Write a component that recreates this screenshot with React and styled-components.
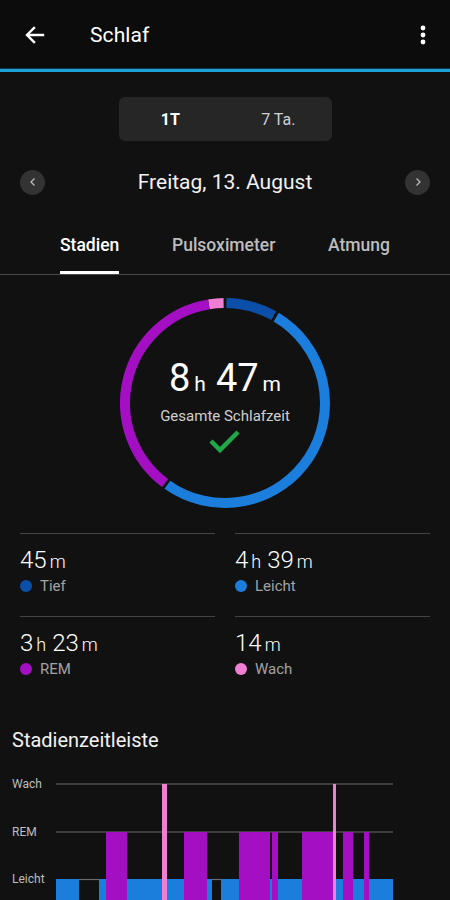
import React from "react";
import styled, { createGlobalStyle } from "styled-components";

const GlobalStyle = createGlobalStyle`
  html, body {
    margin: 0;
    padding: 0;
    background: #111111;
    overflow: hidden;
  }
  body {
    font-family: Roboto, "Noto Sans", sans-serif;
    color: #ffffff;
  }
`;

const Page = styled.div`
  width: 450px;
  height: 900px;
  background: #111111;
  overflow: hidden;
`;

const TopBar = styled.header`
  height: 69px;
  display: flex;
  align-items: center;
  padding: 0 14px 0 22px;
  background: #0c0c0c;
  border-bottom: 3px solid #1ea3d6;
  box-shadow: 0 -1px 0 #0a3a5a inset;
`;

const Title = styled.h1`
  flex: 1;
  margin: 0 0 0 42px;
  font-size: 21px;
  font-weight: 400;
  letter-spacing: 0.1px;
`;

const IconButton = styled.button`
  border: 0;
  background: none;
  padding: 0;
  display: flex;
  align-items: center;
  justify-content: center;
  color: #fff;
  width: 26px;
  height: 26px;
`;

const Segmented = styled.div`
  margin: 25px auto 0;
  width: 213px;
  height: 44px;
  border-radius: 6px;
  background: #262626;
  display: grid;
  grid-template-columns: 1fr 1fr;
  align-items: center;
`;

const Segment = styled.span`
  text-align: center;
  font-size: 16px;
  font-weight: ${(p) => (p.active ? 700 : 400)};
  color: ${(p) => (p.active ? "#ffffff" : "#d0d0d0")};
  padding-right: ${(p) => (p.active ? "3px" : "0")};
`;

const DateRow = styled.div`
  margin-top: 21px;
  height: 40px;
  display: flex;
  align-items: center;
  justify-content: space-between;
  padding: 0 20px;
`;

const RoundButton = styled.button`
  width: 25px;
  height: 25px;
  border-radius: 50%;
  border: 0;
  padding: 0;
  background: #333333;
  display: flex;
  align-items: center;
  justify-content: center;
`;

const DateLabel = styled.span`
  font-size: 21px;
  color: #f2f2f2;
`;

const TabBar = styled.nav`
  margin-top: 14px;
  display: flex;
  justify-content: space-between;
  padding: 0 60px 0 60px;
  border-bottom: 1px solid #4a4a4a;
`;

const Tab = styled.div`
  height: 58px;
  display: flex;
  align-items: center;
  font-size: 17.5px;
  font-weight: 500;
  color: ${(p) => (p.active ? "#ffffff" : "#bdbdbd")};
  box-shadow: ${(p) => (p.active ? "inset 0 -3px 0 #ffffff" : "none")};
  box-sizing: border-box;
`;

const RingWrap = styled.div`
  position: relative;
  margin: 18px auto 0;
  width: 220px;
  height: 220px;
`;

const RingCenter = styled.div`
  position: absolute;
  inset: 0;
  display: flex;
  flex-direction: column;
  align-items: center;
  justify-content: center;
  padding-top: 6px;
`;

const BigTime = styled.div`
  display: flex;
  align-items: baseline;
  font-weight: 400;
  line-height: 40px;
`;

const BigNum = styled.span`
  font-size: 38px;
  margin-left: ${(p) => (p.gap ? "10px" : "0")};
`;

const BigUnit = styled.span`
  font-size: 21px;
  margin-left: 4px;
`;

const RingCaption = styled.div`
  font-size: 15px;
  color: #cfcfcf;
  margin-top: 3px;
`;

const StatsGrid = styled.section`
  margin-top: 20px;
  padding: 0 20px;
  display: grid;
  grid-template-columns: 1fr 1fr;
  column-gap: 20px;
`;

const StatCell = styled.div`
  border-top: 1px solid #444444;
  height: 83px;
  padding-top: 13px;
  box-sizing: border-box;
`;

const StatValue = styled.div`
  display: flex;
  align-items: baseline;
  font-weight: 300;
  line-height: 26px;
`;

const StatNum = styled.span`
  font-size: 24px;
  margin-left: ${(p) => (p.gap ? "6px" : "0")};
`;

const StatUnit = styled.span`
  font-size: 18px;
  margin-left: 3px;
`;

const StatLabel = styled.div`
  display: flex;
  align-items: center;
  gap: 8px;
  margin-top: 2px;
  font-size: 15px;
  color: #a3a3a3;
`;

const Dot = styled.span`
  width: 12px;
  height: 12px;
  border-radius: 50%;
  background: ${(p) => p.color};
`;

const SectionTitle = styled.h2`
  margin: 29px 0 0 12px;
  font-size: 20px;
  font-weight: 400;
  color: #f2f2f2;
`;

const ChartSvg = styled.svg`
  display: block;
  margin-top: 19px;
`;

const COLORS = {
  tief: "#0b4fa8",
  leicht: "#1b7edc",
  rem: "#a40fc4",
  wach: "#f07fd4",
};

const stats = [
  { parts: [["45", "m"]], label: "Tief", color: COLORS.tief },
  { parts: [["4", "h"], ["39", "m"]], label: "Leicht", color: COLORS.leicht },
  { parts: [["3", "h"], ["23", "m"]], label: "REM", color: COLORS.rem },
  { parts: [["14", "m"]], label: "Wach", color: COLORS.wach },
];

// ring: angles in degrees, 0 = top, clockwise
const ringSegments = [
  { from: -9.3, to: -0.8, color: COLORS.wach },
  { from: 0.8, to: 29.2, color: COLORS.tief },
  { from: 30.8, to: 215.2, color: COLORS.leicht },
  { from: 216.8, to: 350.7, color: COLORS.rem },
];

const arc = (cx, cy, r, a0, a1) => {
  const p = (a) => {
    const rad = (a * Math.PI) / 180;
    return [cx + r * Math.sin(rad), cy - r * Math.cos(rad)];
  };
  const [x0, y0] = p(a0);
  const [x1, y1] = p(a1);
  const large = a1 - a0 > 180 ? 1 : 0;
  return `M ${x0} ${y0} A ${r} ${r} 0 ${large} 1 ${x1} ${y1}`;
};

// chart bars in page x coords
const remBars = [
  [106, 127],
  [184, 207],
  [239, 270],
  [272, 278],
  [302, 333],
  [343, 353],
  [364, 369],
];
const wachBars = [
  [162, 167],
  [333, 336],
];
const tiefGaps = [
  [79, 99],
  [212, 221],
];

const Timeline = () => {
  const yW = 13;
  const yR = 61;
  const yL = 108;
  const bottom = 140;
  return (
    <ChartSvg width="450" height="140" viewBox="0 0 450 140">
      <g fontFamily="Roboto, sans-serif" fontSize="12" fill="#bdbdbd">
        <text x="12" y={yW + 4}>Wach</text>
        <text x="12" y={yR + 4}>REM</text>
        <text x="12" y={yL + 4}>Leicht</text>
      </g>
      <rect x="56" y={yL} width="337" height={bottom - yL} fill={COLORS.leicht} />
      {tiefGaps.map(([a, b]) => (
        <rect key={a} x={a} y={yL} width={b - a} height={bottom - yL} fill="#111111" />
      ))}
      <line x1="56" x2="393" y1={yW} y2={yW} stroke="#6a6a6a" strokeWidth="1.2" />
      <line x1="56" x2="393" y1={yR} y2={yR} stroke="#6a6a6a" strokeWidth="1.2" />
      {tiefGaps.map(([a, b]) => (
        <line key={a} x1={a} x2={b} y1={yL + 0.5} y2={yL + 0.5} stroke="#6a6a6a" strokeWidth="1.2" />
      ))}
      {remBars.map(([a, b]) => (
        <rect key={a} x={a} y={yR} width={b - a} height={bottom - yR} fill={COLORS.rem} />
      ))}
      {wachBars.map(([a, b]) => (
        <rect key={a} x={a} y={yW} width={b - a} height={bottom - yW} fill={COLORS.wach} />
      ))}
    </ChartSvg>
  );
};

export default function App() {
  return (
    <Page>
      <GlobalStyle />
      <TopBar>
        <IconButton aria-label="Zurück">
          <svg width="24" height="24" viewBox="0 0 24 24">
            <path
              d="M20 12H4.5M11 5l-7 7 7 7"
              fill="none"
              stroke="#fff"
              strokeWidth="2.4"
              strokeLinecap="square"
            />
          </svg>
        </IconButton>
        <Title>Schlaf</Title>
        <IconButton aria-label="Mehr">
          <svg width="6" height="20" viewBox="0 0 6 20">
            <circle cx="3" cy="3" r="2.4" fill="#fff" />
            <circle cx="3" cy="10" r="2.4" fill="#fff" />
            <circle cx="3" cy="17" r="2.4" fill="#fff" />
          </svg>
        </IconButton>
      </TopBar>

      <Segmented>
        <Segment active>1T</Segment>
        <Segment>7 Ta.</Segment>
      </Segmented>

      <DateRow>
        <RoundButton aria-label="Zurück">
          <svg width="10" height="10" viewBox="0 0 10 10">
            <path d="M6.5 1.5L3 5l3.5 3.5" fill="none" stroke="#bbb" strokeWidth="1.3" />
          </svg>
        </RoundButton>
        <DateLabel>Freitag, 13. August</DateLabel>
        <RoundButton aria-label="Weiter">
          <svg width="10" height="10" viewBox="0 0 10 10">
            <path d="M3.5 1.5L7 5 3.5 8.5" fill="none" stroke="#bbb" strokeWidth="1.3" />
          </svg>
        </RoundButton>
      </DateRow>

      <TabBar>
        <Tab active>Stadien</Tab>
        <Tab>Pulsoximeter</Tab>
        <Tab>Atmung</Tab>
      </TabBar>

      <RingWrap>
        <svg width="220" height="220" viewBox="0 0 220 220">
          {ringSegments.map((s) => (
            <path
              key={s.from}
              d={arc(110, 110, 100, s.from, s.to)}
              fill="none"
              stroke={s.color}
              strokeWidth="10"
            />
          ))}
        </svg>
        <RingCenter>
          <BigTime>
            <BigNum>8</BigNum>
            <BigUnit>h</BigUnit>
            <BigNum gap>47</BigNum>
            <BigUnit>m</BigUnit>
          </BigTime>
          <RingCaption>Gesamte Schlafzeit</RingCaption>
          <svg width="34" height="26" viewBox="0 0 34 26" style={{ marginTop: 4 }}>
            <path
              d="M3 12l9 9L30 3"
              fill="none"
              stroke="#1fa84a"
              strokeWidth="4.5"
            />
          </svg>
        </RingCenter>
      </RingWrap>

      <StatsGrid>
        {stats.map((s) => (
          <StatCell key={s.label}>
            <StatValue>
              {s.parts.map(([n, u], i) => (
                <React.Fragment key={u}>
                  <StatNum gap={i > 0}>{n}</StatNum>
                  <StatUnit>{u}</StatUnit>
                </React.Fragment>
              ))}
            </StatValue>
            <StatLabel>
              <Dot color={s.color} />
              {s.label}
            </StatLabel>
          </StatCell>
        ))}
      </StatsGrid>

      <SectionTitle>Stadienzeitleiste</SectionTitle>
      <Timeline />
    </Page>
  );
}
